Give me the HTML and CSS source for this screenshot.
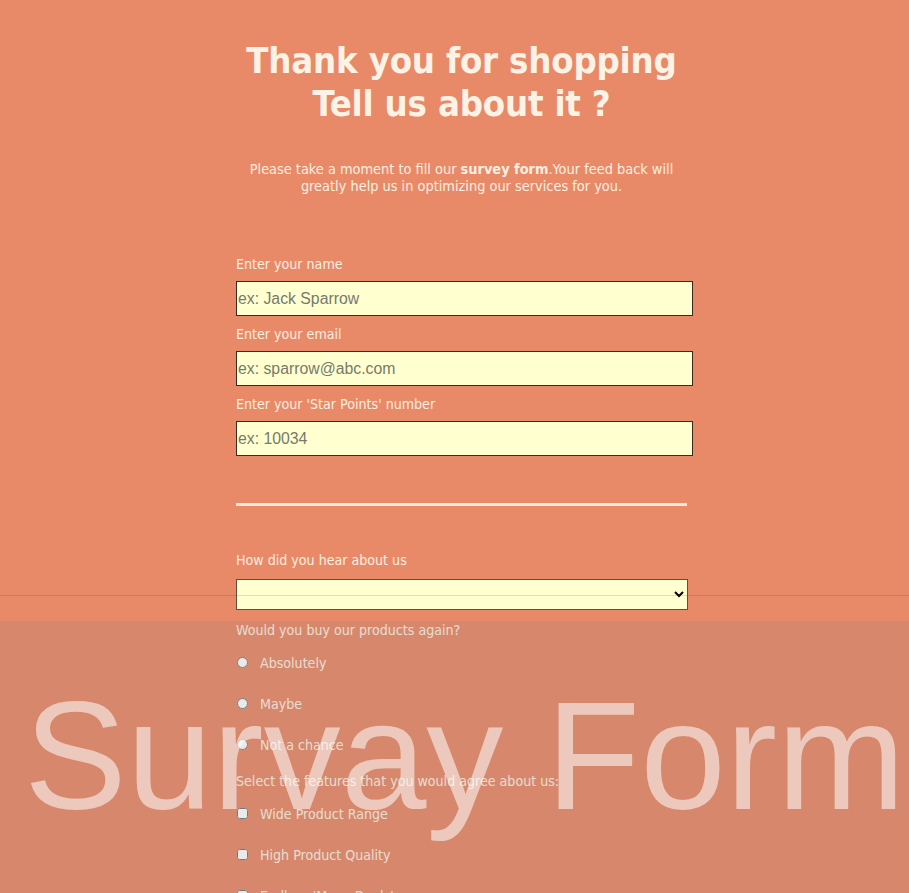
FILE: index.html
```html
<!DOCTYPE html>
<html lang="en">
<head>
<meta charset="utf-8">
<title>Survey Form</title>
<link rel="stylesheet" href="styles.css">
</head>
<body>
<main class="page">
  <header class="intro">
    <h1 class="title">Thank you for shopping<br>Tell us about it ?</h1>
    <p class="lead">Please take a moment to fill our <b>survey form</b>.Your feed back will greatly help us in optimizing our services for you.</p>
  </header>
  <form class="form">
    <label class="label" for="name">Enter your name</label>
    <input class="field" id="name" type="text" placeholder="ex: Jack Sparrow">
    <label class="label" for="email">Enter your email</label>
    <input class="field" id="email" type="email" placeholder="ex: sparrow@abc.com">
    <label class="label" for="num">Enter your 'Star Points' number</label>
    <input class="field" id="num" type="text" placeholder="ex: 10034">
    <hr class="rule">
    <label class="label" for="hear">How did you hear about us</label>
    <select class="select" id="hear">
      <option></option>
      <option>Friends</option>
      <option>Advertisement</option>
    </select>
    <p class="label label-q">Would you buy our products again?</p>
    <label class="opt"><input type="radio" name="again"> Absolutely</label>
    <label class="opt"><input type="radio" name="again"> Maybe</label>
    <label class="opt"><input type="radio" name="again"> Not a chance</label>
    <p class="label label-q2">Select the features that you would agree about us:</p>
    <label class="opt"><input type="checkbox"> Wide Product Range</label>
    <label class="opt"><input type="checkbox"> High Product Quality</label>
    <label class="opt"><input type="checkbox"> Endless 'Mega Deals'</label>
    <label class="opt"><input type="checkbox"> Fast Delivery</label>
  </form>
</main>
<footer class="overlay">
  <div class="overlay-band">
    <span class="overlay-text">Survay Form</span>
  </div>
</footer>
</body>
</html>
```
FILE: styles.css
```css
html, body {
  margin: 0;
  padding: 0;
}
body {
  background: #e88a68;
  color: #fcefe0;
  font-family: "DejaVu Sans Condensed", "DejaVu Sans", sans-serif;
  font-size: 14px;
  padding-left: 14px;
}
.page {
  width: 451px;
  margin: 0 auto;
  padding-top: 39px;
}
.intro {
  text-align: center;
}
.title {
  margin: 0 -60px;
  font-size: 36.2px;
  line-height: 43px;
  font-weight: bold;
  color: #fcf3e6;
  letter-spacing: -0.2px;
}
.lead {
  margin: 36px -8px 0;
  font-size: 14.4px;
  line-height: 17px;
}
.form {
  display: flex;
  flex-direction: column;
  align-items: flex-start;
  padding-top: 61px;
  padding-bottom: 200px;
}
.label {
  display: block;
  margin: 0;
  font-size: 14.1px;
  line-height: 17px;
  color: #fcefe0;
}
.field {
  width: 453px;
  height: 33px;
  margin: 8px 0 10px;
  padding: 0 1px;
  border: 1px solid #3a2a20;
  background: #ffffd0;
  font-family: "Liberation Sans", Arial, sans-serif;
  font-size: 15.8px;
  color: #333;
}
.field::placeholder {
  color: #777a6e;
}
.rule {
  width: 451px;
  margin: 37px 0 46px;
  border: 0;
  height: 3px;
  background: #fde8dc;
}
.select {
  width: 452px;
  height: 31px;
  margin: 10px 0 12px;
  border: 1px solid #6b4a3a;
  background: #ffffd0;
  border-radius: 0;
}
.label-q {
  margin-bottom: 15px;
}
.opt {
  display: flex;
  align-items: center;
  gap: 12px;
  height: 17px;
  margin-bottom: 24px;
  font-size: 14.1px;
}
.opt input {
  margin: 0 0 0 1px;
  width: 11px;
  height: 11px;
}
.label-q2 {
  margin-top: -4px;
  margin-bottom: 15px;
}
.overlay {
  position: fixed;
  left: 0;
  right: 0;
  bottom: 0;
  height: 297px;
  border-top: 1px solid rgba(90, 60, 40, 0.18);
  display: flex;
  flex-direction: column;
  justify-content: flex-end;
  pointer-events: none;
}
.overlay-band {
  height: 272px;
  background: rgba(128, 128, 128, 0.17);
  overflow: hidden;
}
.overlay-text {
  display: block;
  padding-left: 24px;
  margin-top: 50px;
  font-family: "Liberation Sans", Arial, sans-serif;
  font-size: 154px;
  line-height: 170px;
  color: rgba(255, 255, 255, 0.55);
  white-space: nowrap;
}
```
